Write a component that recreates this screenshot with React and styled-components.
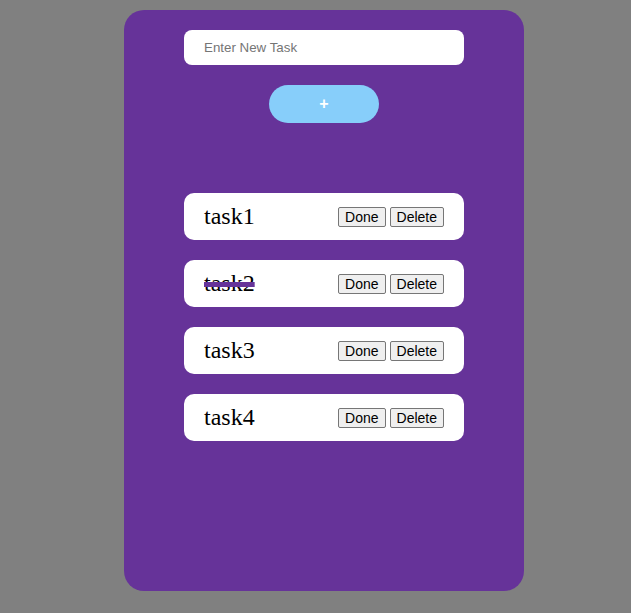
import React from "react";
import styled, { createGlobalStyle } from "styled-components";

const Global = createGlobalStyle`
  html, body { margin: 0; padding: 0; background: #808080; }
  body { font-family: "Liberation Serif", serif; }
`;

const Page = styled.div`
  display: flex;
  justify-content: center;
  padding: 10px 0 0 17px;
`;

const Card = styled.div`
  width: 400px;
  height: 581px;
  box-sizing: border-box;
  background: #663399;
  border-radius: 20px;
  padding-top: 20px;
  display: flex;
  flex-direction: column;
  align-items: center;
`;

const Input = styled.input`
  width: 280px;
  height: 35px;
  box-sizing: border-box;
  border: none;
  border-radius: 8px;
  padding: 0 20px;
  font-family: "Liberation Sans", Arial, sans-serif;
  font-size: 13.333px;
  background: #fff;
  outline: none;
  &::placeholder { color: #757575; }
`;

const AddButton = styled.button`
  margin-top: 20px;
  width: 110px;
  height: 38px;
  border: none;
  border-radius: 19px;
  background: #87cefa;
  color: #fff;
  font-family: "Liberation Sans", Arial, sans-serif;
  font-weight: bold;
  font-size: 16px;
  padding: 0;
`;

const List = styled.div`
  margin-top: 70px;
  display: flex;
  flex-direction: column;
  gap: 20px;
`;

const Row = styled.div`
  width: 280px;
  height: 47px;
  box-sizing: border-box;
  background: #fff;
  border-radius: 10px;
  padding: 0 20px;
  display: flex;
  align-items: center;
  justify-content: space-between;
`;

const Label = styled.span`
  font-family: "Liberation Serif", "Times New Roman", serif;
  font-size: 24px;
  color: #000;
  text-decoration: ${(p) => (p.$done ? "line-through" : "none")};
  text-decoration-color: #663399;
  text-decoration-thickness: 5px;
`;

const Actions = styled.div`
  display: flex;
  gap: 4px;
`;

const SmallButton = styled.button`
  font-family: "Liberation Sans", Arial, sans-serif;
  font-size: 14px;
  line-height: 16px;
  padding: 1px 6px;
  border: 1px solid #767676;
  border-radius: 2px;
  background: #efefef;
  color: #000;
`;

const tasks = [
  { name: "task1", done: false },
  { name: "task2", done: true },
  { name: "task3", done: false },
  { name: "task4", done: false },
];

export default function App() {
  return (
    <>
      <Global />
      <Page>
        <Card>
          <Input placeholder="Enter New Task" />
          <AddButton>+</AddButton>
          <List>
            {tasks.map((t) => (
              <Row key={t.name}>
                <Label $done={t.done}>{t.name}</Label>
                <Actions>
                  <SmallButton>Done</SmallButton>
                  <SmallButton>Delete</SmallButton>
                </Actions>
              </Row>
            ))}
          </List>
        </Card>
      </Page>
    </>
  );
}
